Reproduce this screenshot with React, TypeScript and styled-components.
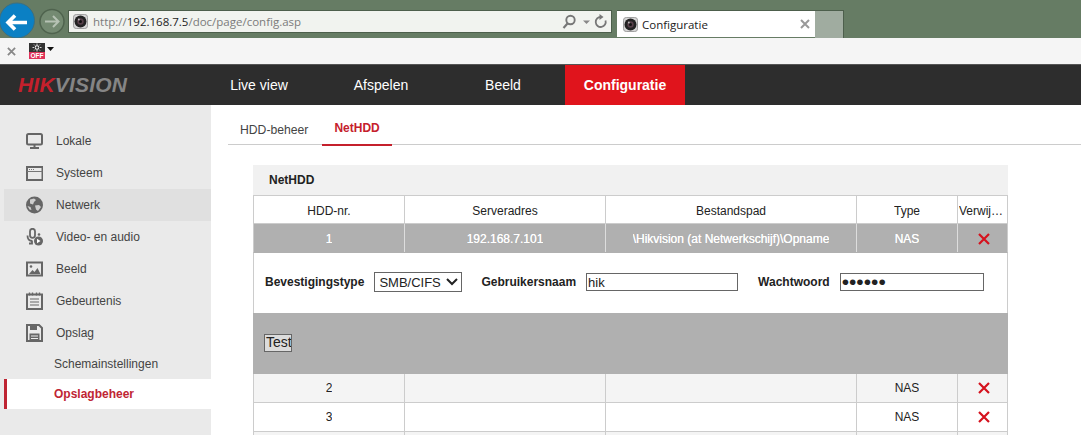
import styled, { createGlobalStyle } from "styled-components";

const GlobalStyle = createGlobalStyle`
  html, body {
    margin: 0;
    height: 100%;
    overflow: hidden;
    background: white;
  }

  body {
    font-family: "Liberation Sans", Arial, sans-serif;
  }
`;

const Page = styled.div`
  width: 1081px;
  height: 435px;
  overflow: hidden;
  display: flex;
  flex-direction: column;
`;

/* browser chrome */
const TitleBar = styled.div`
  height: 38px;
  flex: none;
  background: #667c64;
  display: flex;
  align-items: flex-start;
  font-family: "Open Sans", "Noto Sans", sans-serif;
`;

const NavButtons = styled.div`
  width: 68px;
  height: 38px;
  flex: none;
`;

const AddressBar = styled.div`
  width: 544px;
  height: 23px;
  box-sizing: border-box;
  flex: none;
  margin-top: 10px;
  border: 1px solid #4d5f4c;
  background: #f1f3ef;
  display: flex;
  align-items: center;
  padding: 0 3px 0 4px;
  font-size: 11.5px;
  color: #7b7b7b;
`;

const Url = styled.span`
  margin-left: 5px;
  flex: 1;

  b {
    font-weight: 400;
    color: #222;
  }
`;

const BrowserTab = styled.div`
  width: 198px;
  height: 27px;
  box-sizing: border-box;
  flex: none;
  margin: 10px 0 0 5px;
  background: white;
  border-top: 1px solid #4d5f4c;
  display: flex;
  align-items: center;
  padding: 0 5px 0 6px;
  font-size: 11.5px;
  color: #222;

  span {
    flex: 1;
    margin-left: 4px;
  }
`;

const NewTab = styled.div`
  width: 29px;
  height: 28px;
  box-sizing: border-box;
  flex: none;
  margin-top: 10px;
  background: #a0aca0;
  border: 1px solid #4d5f4c;
  border-left: 0;
  border-bottom: 0;
`;

const FavBar = styled.div`
  height: 27px;
  box-sizing: border-box;
  flex: none;
  background: #f5f5f5;
  border-bottom: 1px solid #555;
  display: flex;
  align-items: center;
  padding-left: 7px;
  gap: 13px;
`;

const CaretIcon = styled.svg`
  margin: -4px 0 0 -11px;
`;

/* device header */
const Header = styled.header`
  height: 40px;
  flex: none;
  background: #2d2d2d;
  position: relative;
  display: flex;
  padding-left: 199px;
  gap: 2px;
`;

const Logo = styled.div`
  position: absolute;
  left: 18px;
  top: 8px;
  font-size: 21px;
  line-height: 24px;
  font-weight: 700;
  font-style: italic;
  letter-spacing: 0.2px;
  color: #858585;

  em {
    color: #c5202c;
  }
`;

const NavItem = styled.div<{ $active?: boolean }>`
  width: 120px;
  display: flex;
  align-items: center;
  justify-content: center;
  font-size: 14px;
  font-weight: ${(p) => (p.$active ? 700 : 400)};
  color: white;
  background: ${(p) => (p.$active ? "#e0141c" : "transparent")};
`;

/* page body */
const Body = styled.div`
  flex: 1;
  min-height: 0;
  display: flex;
`;

const Sidebar = styled.nav`
  width: 211px;
  flex: none;
  box-sizing: border-box;
  padding: 20px 0 0 4px;
  background: #eaeaea;
`;

const MenuItem = styled.div<{ $active?: boolean }>`
  height: 32px;
  display: flex;
  align-items: center;
  padding-left: 22px;
  gap: 13px;
  font-size: 12px;
  color: #444;
  background: ${(p) => (p.$active ? "#e0e0e0" : "transparent")};

  svg {
    width: 17px;
    height: 18px;
    flex: none;
  }
`;

const SubItem = styled.div<{ $active?: boolean }>`
  height: 30px;
  box-sizing: border-box;
  display: flex;
  align-items: center;
  padding-left: ${(p) => (p.$active ? "47px" : "50px")};
  font-size: 12px;
  font-weight: ${(p) => (p.$active ? 700 : 400)};
  color: ${(p) => (p.$active ? "#bf2533" : "#444")};
  background: ${(p) => (p.$active ? "white" : "transparent")};
  border-left: ${(p) => (p.$active ? "3px solid #bf2533" : "0")};
`;

const Main = styled.main`
  flex: 1;
  min-width: 0;
  padding-left: 17px;
`;

const Tabs = styled.div`
  height: 40px;
  box-sizing: border-box;
  display: flex;
  border-bottom: 1px solid #ccc;
  padding: 12px 0 0 12px;
  gap: 2px;
`;

const TabItem = styled.div<{ $active?: boolean }>`
  height: 27px;
  box-sizing: content-box;
  padding: 0 12px;
  margin-left: ${(p) => (p.$active ? "0" : "-12px")};
  font-size: ${(p) => (p.$active ? "12px" : "12.200px")};
  line-height: ${(p) => (p.$active ? "23px" : "27px")};
  font-weight: ${(p) => (p.$active ? 700 : 400)};
  color: ${(p) => (p.$active ? "#c5202c" : "#444")};
  border-bottom: ${(p) => (p.$active ? "2px solid #c5202c" : "0")};
`;

const Panel = styled.section`
  width: 755px;
  margin: 20px 0 0 25px;
`;

const PanelTitle = styled.div`
  height: 30px;
  background: #f1f1f1;
  padding-left: 16px;
  font-size: 12px;
  font-weight: 700;
  line-height: 30px;
  color: #222;
`;

type RowVariant = "head" | "selected" | "odd" | "even";

const Row = styled.div<{ $variant: RowVariant }>`
  height: 29px;
  box-sizing: border-box;
  display: grid;
  grid-template-columns: 151px 201px 251px 101px 51px;
  border-left: 1px solid #ccc;
  border-right: 1px solid #ccc;
  border-top: ${(p) => (p.$variant === "head" ? "1px solid #ccc" : "0")};
  border-bottom: 1px solid ${(p) => (p.$variant === "selected" ? "#b0b0b0" : "#ccc")};
  font-size: 12px;
  color: ${(p) => (p.$variant === "selected" ? "white" : "#222")};
  text-shadow: ${(p) => (p.$variant === "selected" ? "0 0 0.6px white" : "none")};
  background: ${(p) =>
    p.$variant === "selected" ? "#b0b0b0" : p.$variant === "odd" ? "#f4f4f4" : "white"};
`;

const Cell = styled.div<{ $variant: RowVariant }>`
  display: flex;
  align-items: center;
  justify-content: center;
  min-width: 0;
  padding: ${(p) => (p.$variant === "head" || p.$variant === "selected" ? "2px 1px 0" : "0 1px")};
  border-right: 1px solid ${(p) => (p.$variant === "selected" ? "#ddd" : "#ccc")};

  &:last-child {
    border-right: 0;
  }

  span {
    overflow: hidden;
    white-space: nowrap;
    text-overflow: ellipsis;
  }
`;

const FormRow = styled.div`
  height: 60px;
  box-sizing: border-box;
  display: flex;
  align-items: center;
  padding: 0 0 2px 11px;
  border-left: 1px solid #ccc;
  border-right: 1px solid #ccc;
`;

const Label = styled.label<{ $gap: number; $left: number }>`
  font-size: 12px;
  font-weight: 700;
  color: #222;
  margin-left: ${(p) => p.$left}px;
  margin-right: ${(p) => p.$gap}px;
`;

const SelectBox = styled.div`
  position: relative;
  width: 88px;
  height: 20px;

  svg {
    position: absolute;
    right: 4px;
    top: 6px;
    pointer-events: none;
  }
`;

const Select = styled.select`
  appearance: none;
  width: 100%;
  height: 100%;
  box-sizing: border-box;
  padding: 0 0 0 4px;
  border: 1px solid #666;
  border-radius: 0;
  background: white;
  color: #222;
  font-family: "Liberation Sans", Arial, sans-serif;
  font-size: 13px;
`;

const TextInput = styled.input<{ $width: number; $dots?: boolean }>`
  width: ${(p) => p.$width}px;
  height: 18px;
  box-sizing: border-box;
  padding: 0 1px;
  border: 1px solid #666;
  border-radius: 0;
  outline: 0;
  color: #222;
  font-family: "Liberation Sans", Arial, sans-serif;
  font-size: ${(p) => (p.$dots ? "21px" : "13px")};
`;

const TestBand = styled.div`
  height: 61px;
  box-sizing: border-box;
  background: #b0b0b0;
  display: flex;
  align-items: center;
  padding: 0 0 2px 11px;
`;

const TestButton = styled.button`
  width: 28px;
  height: 18px;
  box-sizing: border-box;
  padding: 0 0 2px 1px;
  border: 1px solid #666;
  border-radius: 0;
  background: #dcdcdc;
  color: #222;
  font-family: "Liberation Sans", Arial, sans-serif;
  font-size: 14px;
  line-height: 14px;
  text-align: left;
  overflow: hidden;
`;

const CameraIcon = () => (
  <svg width="15" height="15" viewBox="0 0 16 16">
    <rect x="0.500" y="0.500" width="15" height="15" rx="3" fill="#d6d6d6" stroke="#999" />
    <circle cx="8" cy="8" r="6.400" fill="#222" />
    <circle cx="8" cy="8" r="3.400" fill="#57404a" />
    <circle cx="8" cy="8" r="1.600" fill="#111" />
    <circle cx="6.200" cy="5.800" r="1" fill="#bbb" />
  </svg>
);

const CloseIcon = ({ size = 10, color = "#999" }: { size?: number; color?: string }) => (
  <svg width={size} height={size} viewBox="0 0 10 10">
    <path d="M1 1l8 8M9 1l-8 8" stroke={color} strokeWidth="2" fill="none" />
  </svg>
);

const DeleteIcon = () => (
  <svg width="12" height="12" viewBox="0 0 12 12">
    <path d="M1 1l10 10M11 1L1 11" stroke="#d5121e" strokeWidth="2.200" fill="none" />
  </svg>
);

const NavArrows = () => (
  <svg width="68" height="38" viewBox="0 0 68 38">
    <circle cx="17" cy="20.500" r="17.500" fill="#0b80c4" stroke="#3d6f80" strokeWidth="1" />
    <path d="M8 22.500h19M15 15.500l-7 7 7 7" stroke="white" strokeWidth="3.600" fill="none" />
    <circle cx="52" cy="21.500" r="12" fill="#748a72" stroke="#4f634e" strokeWidth="1.500" />
    <path d="M45 21.500h13M53 16l5.500 5.500-5.500 5.500" stroke="#b6c2b4" strokeWidth="2" fill="none" />
  </svg>
);

const SearchTools = () => (
  <svg width="46" height="16" viewBox="0 0 46 16">
    <circle cx="8.500" cy="6" r="4.200" fill="none" stroke="#777" strokeWidth="1.900" />
    <path d="M5.500 9.500L1.500 14" stroke="#777" strokeWidth="2.200" />
    <path d="M21 6.500h7l-3.500 3.500z" fill="#888" />
    <path d="M39 3a5 5 0 1 0 4.500 3.500" fill="none" stroke="#777" strokeWidth="1.800" />
    <path d="M37.500 0v6l4-3z" fill="#777" />
  </svg>
);

const OffIcon = () => (
  <svg width="16" height="16" viewBox="0 0 16 16">
    <rect width="16" height="9" fill="#333" />
    <rect y="9" width="16" height="7" fill="#e0325a" />
    <circle cx="8" cy="4.500" r="1.800" fill="none" stroke="white" />
    <path
      d="M8 0.500v1.500M8 7v1.500M3.500 4.500h1.500M11 4.500h1.500M5 1.500l1 1M10 6.500l1 1M11 1.500l-1 1M6 6.500l-1 1"
      stroke="white"
      strokeWidth="0.800"
    />
    <text x="8" y="15" textAnchor="middle" fontSize="6.500" fontWeight="700" fill="white" fontFamily="Liberation Sans">
      OFF
    </text>
  </svg>
);

const Caret = () => (
  <CaretIcon width="7" height="4" viewBox="0 0 7 4">
    <path d="M0 0h7L3.500 4z" fill="#111" />
  </CaretIcon>
);

const Chevron = () => (
  <svg width="12" height="8" viewBox="0 0 12 8">
    <path d="M1 1l5 5 5-5" stroke="#222" strokeWidth="2" fill="none" />
  </svg>
);

const icons = {
  monitor: (
    <svg viewBox="0 0 17 18">
      <rect x="1" y="2" width="15" height="10.500" rx="1.500" fill="none" stroke="#666" strokeWidth="2" />
      <path d="M8.500 13v2.500M4 16h9" stroke="#666" strokeWidth="2" />
    </svg>
  ),
  system: (
    <svg viewBox="0 0 17 18">
      <rect x="1" y="3" width="15.500" height="13" fill="none" stroke="#666" strokeWidth="2" />
      <path d="M1 7.500h15.500" stroke="#777" strokeWidth="1" />
      <path d="M3 5.500h1M5 5.500h1M7 5.500h1" stroke="#777" strokeWidth="1" />
    </svg>
  ),
  globe: (
    <svg viewBox="0 0 17 18">
      <circle cx="8.500" cy="9" r="8.500" fill="#666" />
      <path d="M4 3.500l4-1 2 1.500-2 2-1 2.500-3-1zM9 9.500l4-.5 2 2-3 4-2-1.500zM1.500 10l3 1 1 3-2-.5z" fill="#cfcfcf" />
    </svg>
  ),
  mic: (
    <svg viewBox="0 0 17 18">
      <rect x="4" y="0.800" width="5" height="9" rx="2.500" fill="none" stroke="#666" strokeWidth="1.800" />
      <path d="M1.500 7.500c0 4 2.500 5.500 5 5.500M6 13v2.500H3" fill="none" stroke="#666" strokeWidth="1.800" />
      <circle cx="12.500" cy="13" r="4.500" fill="#666" />
      <path d="M11 10.700v4.600l3.500-2.300z" fill="white" />
      <circle cx="13" cy="6.500" r="1.300" fill="#666" />
    </svg>
  ),
  image: (
    <svg viewBox="0 0 17 18">
      <rect x="1" y="2.500" width="15" height="13" fill="none" stroke="#666" strokeWidth="2" />
      <path d="M3 14l3.500-4 2 2 3-4 3 6z" fill="#666" />
      <circle cx="5" cy="6.500" r="1.300" fill="#666" />
    </svg>
  ),
  calendar: (
    <svg viewBox="0 0 17 18">
      <rect x="1" y="2.500" width="15" height="14.500" fill="none" stroke="#666" strokeWidth="2" />
      <path d="M3.500 0.500v3M6.500 0.500v3M10.500 0.500v3M13.500 0.500v3" stroke="#666" strokeWidth="1.400" />
      <path d="M4 7h9M4 10h9M4 13h9" stroke="#666" strokeWidth="1.200" />
    </svg>
  ),
  floppy: (
    <svg viewBox="0 0 17 18">
      <path d="M1 1h12l3 3v13H1z" fill="none" stroke="#666" strokeWidth="2" />
      <rect x="4" y="1" width="7" height="5" fill="#666" />
      <rect x="3.500" y="9.500" width="10" height="7" fill="#666" />
      <path d="M5 12h7M5 14.500h7" stroke="#eaeaea" strokeWidth="1" />
    </svg>
  ),
};

const menu = [
  { label: "Lokale", icon: icons.monitor },
  { label: "Systeem", icon: icons.system },
  { label: "Netwerk", icon: icons.globe, active: true },
  { label: "Video- en audio", icon: icons.mic },
  { label: "Beeld", icon: icons.image },
  { label: "Gebeurtenis", icon: icons.calendar },
  { label: "Opslag", icon: icons.floppy },
];

const TableRow = ({
  variant,
  cells,
  last,
}: {
  variant: RowVariant;
  cells: string[];
  last?: React.ReactNode;
}) => (
  <Row $variant={variant}>
    {cells.map((text, i) => (
      <Cell key={i} $variant={variant}>
        <span>{text}</span>
      </Cell>
    ))}
    <Cell $variant={variant}>{last}</Cell>
  </Row>
);

export default function App() {
  return (
    <Page>
      <GlobalStyle />
      <TitleBar>
        <NavButtons>
          <NavArrows />
        </NavButtons>
        <AddressBar>
          <CameraIcon />
          <Url>
            http://<b>192.168.7.5</b>/doc/page/config.asp
          </Url>
          <SearchTools />
        </AddressBar>
        <BrowserTab>
          <CameraIcon />
          <span>Configuratie</span>
          <CloseIcon />
        </BrowserTab>
        <NewTab />
      </TitleBar>
      <FavBar>
        <CloseIcon size={9} color="#888" />
        <OffIcon />
        <Caret />
      </FavBar>
      <Header>
        <Logo>
          <em>HIK</em>VISION
        </Logo>
        <NavItem>Live view</NavItem>
        <NavItem>Afspelen</NavItem>
        <NavItem>Beeld</NavItem>
        <NavItem $active>Configuratie</NavItem>
      </Header>
      <Body>
        <Sidebar>
          {menu.map((item) => (
            <MenuItem key={item.label} $active={item.active}>
              {item.icon}
              {item.label}
            </MenuItem>
          ))}
          <SubItem>Schemainstellingen</SubItem>
          <SubItem $active>Opslagbeheer</SubItem>
        </Sidebar>
        <Main>
          <Tabs>
            <TabItem>HDD-beheer</TabItem>
            <TabItem $active>NetHDD</TabItem>
          </Tabs>
          <Panel>
            <PanelTitle>NetHDD</PanelTitle>
            <TableRow
              variant="head"
              cells={["HDD-nr.", "Serveradres", "Bestandspad", "Type"]}
              last={<span>Verwijderen</span>}
            />
            <TableRow
              variant="selected"
              cells={["1", "192.168.7.101", "\\Hikvision (at Netwerkschijf)\\Opname", "NAS"]}
              last={<DeleteIcon />}
            />
            <FormRow>
              <Label $left={0} $gap={10}>Bevestigingstype</Label>
              <SelectBox>
                <Select defaultValue="smb">
                  <option value="smb">SMB/CIFS</option>
                </Select>
                <Chevron />
              </SelectBox>
              <Label $left={19} $gap={10}>Gebruikersnaam</Label>
              <TextInput $width={152} defaultValue="hik" />
              <Label $left={20} $gap={10}>Wachtwoord</Label>
              <TextInput $width={144} $dots type="password" defaultValue="secret" />
            </FormRow>
            <TestBand>
              <TestButton>Test</TestButton>
            </TestBand>
            <TableRow variant="odd" cells={["2", "", "", "NAS"]} last={<DeleteIcon />} />
            <TableRow variant="even" cells={["3", "", "", "NAS"]} last={<DeleteIcon />} />
            <TableRow variant="odd" cells={["", "", "", ""]} />
          </Panel>
        </Main>
      </Body>
    </Page>
  );
}
